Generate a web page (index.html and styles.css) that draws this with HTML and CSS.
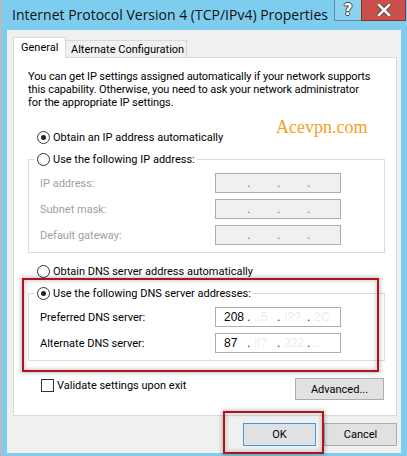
FILE: index.html
```html
<!DOCTYPE html>
<html lang="en">
<head>
  <meta charset="UTF-8">
  <meta name="viewport" content="width=device-width, initial-scale=1.0">
  <title>Internet Protocol Version 4 (TCP/IPv4) Properties</title>
  <link rel="stylesheet" href="styles.css">
</head>
<body>

  <div class="window">
    <div class="titlebar">
      <span class="title">Internet Protocol Version 4 (TCP/IPv4) Properties</span>
      <div class="caption-buttons">
        <button class="cap help">?</button>
        <button class="cap close">
          <svg width="14" height="12" viewBox="0 0 14 12">
            <path d="M2 1 L12 11 M12 1 L2 11" stroke="#4a4a4a" stroke-width="4.5" stroke-linecap="square"/>
            <path d="M2 1 L12 11 M12 1 L2 11" stroke="#fff" stroke-width="2.5" stroke-linecap="square"/>
          </svg>
        </button>
      </div>
    </div>

    <div class="client">
      <div class="tabs">
        <div class="tab active">General</div>
        <div class="tab">Alternate Configuration</div>
      </div>

      <div class="panel">
        <p class="intro">You can get IP settings assigned automatically if your network supports<br>this capability. Otherwise, you need to ask your network administrator<br>for the appropriate IP settings.</p>

        <label class="option first"><span class="radio checked"></span>Obtain an IP address automatically</label>

        <fieldset class="group">
          <legend><label class="option"><span class="radio"></span>Use the following IP address:</label></legend>
          <div class="field disabled">
            <span class="field-label">IP address:</span>
            <div class="ip-box"><span></span><i>.</i><span></span><i>.</i><span></span><i>.</i><span></span></div>
          </div>
          <div class="field disabled">
            <span class="field-label">Subnet mask:</span>
            <div class="ip-box"><span></span><i>.</i><span></span><i>.</i><span></span><i>.</i><span></span></div>
          </div>
          <div class="field disabled">
            <span class="field-label">Default gateway:</span>
            <div class="ip-box"><span></span><i>.</i><span></span><i>.</i><span></span><i>.</i><span></span></div>
          </div>
        </fieldset>

        <label class="option dns-auto"><span class="radio"></span>Obtain DNS server address automatically</label>

        <fieldset class="group">
          <legend><label class="option"><span class="radio checked"></span>Use the following DNS server addresses:</label></legend>
          <div class="field">
            <span class="field-label">Preferred DNS server:</span>
            <div class="ip-box"><span>208</span><i>.</i><span class="blur">.,5</span><i>.</i><span class="blur">!??</span><i>.</i><span class="blur">2C</span></div>
          </div>
          <div class="field">
            <span class="field-label">Alternate DNS server:</span>
            <div class="ip-box"><span>87</span><i>.</i><span class="blur">!!7</span><i>.</i><span class="blur">222</span><i>.</i><span class="blur">..</span></div>
          </div>
        </fieldset>

        <div class="panel-footer">
          <label class="check"><span class="box"></span>Validate settings upon exit</label>
          <button class="btn advanced">Advanced...</button>
        </div>

        <div class="watermark">Acevpn.com</div>
        <div class="highlight dns-mark"></div>
      </div>

      <div class="actions">
        <button class="btn ok">OK</button>
        <button class="btn">Cancel</button>
      </div>
    </div>

    <div class="highlight ok-mark"></div>
  </div>

</body>
</html>
```

FILE: styles.css
```css
body {
  margin: 0;
  padding: 0;
  font-family: Roboto, "Open Sans", sans-serif;
  font-size: 11px;
  color: #000;
  background-color: #7fcdee;
}
.window {
  position: relative;
  width: 405px;
  height: 456px;
  border-left: 2px solid #b3bcc0;
  display: flex;
  flex-direction: column;
}
.titlebar {
  height: 30px;
  display: flex;
  justify-content: space-between;
  align-items: flex-start;
  padding-left: 10px;
}
.title {
  font-family: "Open Sans", sans-serif;
  font-size: 14px;
  line-height: 30px;
  color: #111;
}
.caption-buttons {
  display: flex;
  margin-right: 1px;
}
.cap {
  height: 21px;
  border: 1px solid #5a8ca6;
  border-top: none;
  padding: 0;
  margin: 0;
  display: flex;
  align-items: center;
  justify-content: center;
}
.help {
  width: 28px;
  background: #8cd2f0;
  color: #fff;
  font-family: "DejaVu Sans", sans-serif;
  font-size: 15px;
  font-weight: bold;
  text-shadow: 1px 0 #444, -1px 0 #444, 0 1px #444, 0 -1px #444;
}
.close {
  width: 45px;
  background: #c9504b;
  border-color: #8c2f2b;
  margin-left: -1px;
}
.client {
  flex: 1;
  margin: 0 6px 3px 5px;
  padding: 7px 4px 0 6px;
  background-color: #f0f0f0;
}
.tabs {
  display: flex;
  align-items: flex-end;
  height: 20px;
  position: relative;
  z-index: 1;
  white-space: nowrap;
}
.tab {
  height: 17px;
  line-height: 17px;
  padding: 0 4px 0 5px;
  border: 1px solid #d9d9d9;
  border-bottom: none;
  background: #f0f0f0;
  box-sizing: border-box;
}
.tab.active {
  height: 21px;
  line-height: 19px;
  padding: 0 7px;
  background: #fff;
  margin-bottom: -1px;
  width: 53px;
}
.tab + .tab {
  margin-left: -1px;
  width: 122px;
}
.panel {
  position: relative;
  height: 359px;
  box-sizing: border-box;
  border: 1px solid #d9d9d9;
  background: #fff;
  padding: 0 11px 0 14px;
  white-space: nowrap;
}
.intro {
  margin: 12px 0 0 0;
  line-height: 13px;
  letter-spacing: -0.1px;
}
.option {
  display: flex;
  align-items: center;
  height: 13px;
  line-height: 13px;
}
.option.first {
  margin: 22px 0 0 9px;
}
.option.dns-auto {
  margin: 12px 0 0 9px;
}
.radio {
  width: 13px;
  height: 13px;
  box-sizing: border-box;
  border: 1px solid #333;
  border-radius: 50%;
  background: #fff;
  margin-right: 3px;
  display: flex;
  align-items: center;
  justify-content: center;
}
.radio.checked::after {
  content: "";
  width: 5px;
  height: 5px;
  border-radius: 50%;
  background: #222;
}
.group {
  margin: 9px 0 0 0;
  padding: 7px 0 7px 11px;
  border: 1px solid #dcdcdc;
}
.group legend {
  padding: 0 2px;
  margin-left: -5px;
}
.field {
  display: flex;
  align-items: center;
  height: 20px;
}
.field + .field {
  margin-top: 6px;
}
.field-label {
  width: 175px;
}
.disabled .field-label {
  color: #a0a0a0;
}
.ip-box {
  width: 126px;
  height: 20px;
  box-sizing: border-box;
  border: 1px solid #adadad;
  background: #fff;
  display: flex;
  align-items: center;
  padding-left: 8px;
  font-family: "Liberation Sans", sans-serif;
  font-size: 12px;
}
.disabled .ip-box {
  background: #f0f0f0;
}
.ip-box span {
  width: 23px;
}
.ip-box i {
  font-style: normal;
  width: 7px;
  color: #333;
}
.disabled .ip-box i {
  color: #6d6d6d;
}
.ip-box .blur {
  color: #ececec;
}
.panel-footer {
  display: flex;
  justify-content: space-between;
  align-items: flex-start;
  margin-top: 17px;
  padding-right: 1px;
}
.check {
  display: flex;
  align-items: center;
  margin: 1px 0 0 13px;
}
.box {
  width: 13px;
  height: 13px;
  box-sizing: border-box;
  border: 1px solid #333;
  background: #fff;
  margin-right: 3px;
}
.btn {
  font-family: inherit;
  font-size: 11px;
  height: 23px;
  width: 73px;
  padding: 0;
  border: 1px solid #adadad;
  background: #e1e1e1;
  color: #000;
}
.advanced {
  width: 89px;
  height: 22px;
}
.actions {
  display: flex;
  justify-content: flex-end;
  gap: 8px;
  margin-top: 7px;
}
.ok {
  border-color: #3c9be6;
}
.watermark {
  position: absolute;
  left: 262px;
  top: 59px;
  font-family: "Liberation Serif", serif;
  font-size: 18px;
  color: #f7a11c;
}
.highlight {
  position: absolute;
  border: 2px solid #b3141c;
  box-shadow: 0 0 4px 1px rgba(0, 0, 0, 0.25), inset 0 0 4px 1px rgba(0, 0, 0, 0.2);
}
.dns-mark {
  left: 8px;
  top: 220px;
  width: 353px;
  height: 90px;
}
.ok-mark {
  left: 221px;
  top: 411px;
  width: 97px;
  height: 39px;
}
```
